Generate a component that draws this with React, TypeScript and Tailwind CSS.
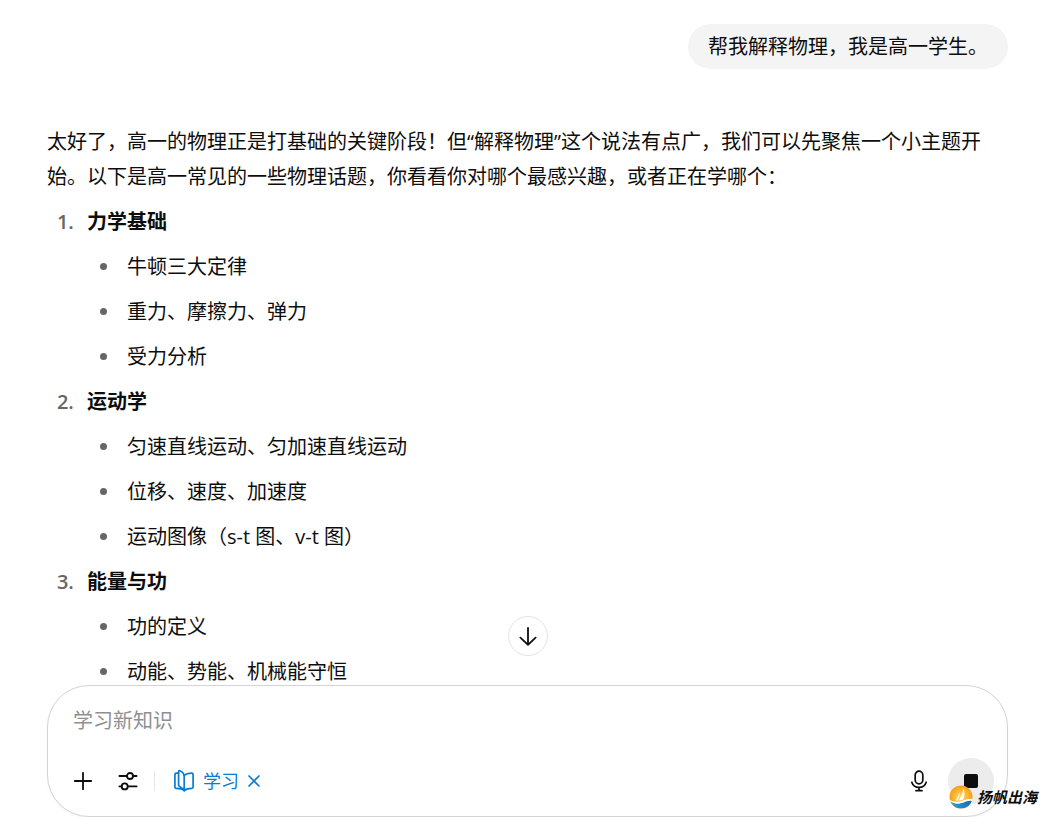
import { useState } from 'react'

const topics = [
  { title: '力学基础', items: ['牛顿三大定律', '重力、摩擦力、弹力', '受力分析'] },
  {
    title: '运动学',
    items: ['匀速直线运动、匀加速直线运动', '位移、速度、加速度', '运动图像（s-t 图、v-t 图）'],
  },
  { title: '能量与功', items: ['功的定义', '动能、势能、机械能守恒'] },
]

function PlusIcon() {
  return (
    <svg width="20" height="20" viewBox="0 0 20 20" fill="none" stroke="currentColor" strokeWidth="1.8" strokeLinecap="round">
      <path d="M10 1.8v16.4M1.8 10h16.4" />
    </svg>
  )
}

function SlidersIcon() {
  return (
    <svg width="20" height="20" viewBox="0 0 20 20" fill="none" stroke="currentColor" strokeWidth="1.8" strokeLinecap="round">
      <path d="M1.4 5h7.2M15.4 5h3.2M1.4 15.400h2.100M9.900 15.400h8.700" />
      <circle cx="12" cy="5" r="3" />
      <circle cx="6.700" cy="15.400" r="3" />
    </svg>
  )
}

function BookIcon() {
  return (
    <svg width="22" height="24" viewBox="0 0 22 24" fill="none" stroke="currentColor" strokeWidth="1.7" strokeLinecap="round" strokeLinejoin="round">
      <path d="M11.2 21.500c-1.800-1.600-4.600-2.200-8-2.200-.8 0-1.300-.5-1.300-1.300V5.500c0-.8.5-1.300 1.300-1.300h2.200" />
      <path d="M11.2 21.500c1.800-1.600 4.600-2.200 7.600-2.200.8 0 1.300-.5 1.300-1.300V5.500c0-.8-.5-1.300-1.300-1.300-3 0-5.800.6-7.600 2.300" />
      <path d="M11.2 21.500V7.500c0-2.300-1.500-4.500-4.200-5.700-.8-.3-1.400 0-1.400.9v13.400c0 .7.3 1.100.9 1.400 2 .9 3.600 2 4.700 4z" />
    </svg>
  )
}

function MicIcon() {
  return (
    <svg width="18" height="22" viewBox="0 0 18 22" fill="none" stroke="currentColor" strokeWidth="1.7" strokeLinecap="round">
      <rect x="5.2" y="1.2" width="7.6" height="12.6" rx="3.8" />
      <path d="M1.8 12.2c1 3.200 3.700 5.200 7.200 5.200s6.200-2 7.200-5.200M9 17.400v3.200M6 20.700h6" />
    </svg>
  )
}

function SailLogo() {
  return (
    <svg width="24" height="24" viewBox="0 0 24 24">
      <defs>
        <radialGradient id="sun" cx="0.5" cy="0.5" r="0.55">
          <stop offset="0" stopColor="#ffd75e" />
          <stop offset="1" stopColor="#f79a12" />
        </radialGradient>
        <linearGradient id="sea" x1="0" x2="1">
          <stop offset="0" stopColor="#2aa6e2" />
          <stop offset="1" stopColor="#1669b5" />
        </linearGradient>
      </defs>
      <circle cx="12" cy="12" r="11.5" fill="url(#sun)" />
      <path d="M1.500 16.500c3.500 2 7.500 2.300 11 1.200 3.700-1.200 6.200-2.900 10.400-2.200A11.500 11.500 0 0 1 1.500 16.500z" fill="url(#sea)" />
      <path d="M.8 14.800c3.600 2.100 7.500 2.600 11.200 1.500 4-1.200 7-3.100 11.400-2l-.4 1.600c-3.900-.8-6.800 1.100-10.500 2.200-4 1.200-7.800.7-11.200-1.800z" fill="#fff" />
      <path d="M14.600 3c1.300 4 1.100 8.400-.6 11.700l-4.600 1c2.800-3.700 4.500-7.700 5.200-12.700z" fill="#fff" />
      <path d="M10.400 7c.5 3 0 6-1.700 8.700l-2.900-.3c2.300-2.400 3.800-5.100 4.600-8.400z" fill="#fff3cf" />
    </svg>
  )
}

export default function App() {
  const [text, setText] = useState('')
  const [study, setStudy] = useState(true)

  return (
    <div className="relative flex h-screen flex-col bg-white pr-[45px] pl-[47px] font-['Open_Sans','Noto_Sans_CJK_SC',sans-serif] text-xl leading-[35px] text-[#0d0d0d]">
      <main className="min-h-0 flex-1 overflow-hidden pt-6" lang="zh-CN">
        <div className="flex justify-end">
          <div className="rounded-full bg-[#f4f4f4] px-5 py-[5px]">帮我解释物理，我是高一学生。</div>
        </div>

        <article className="pt-[55px]">
          <p>
            太好了，高一的物理正是打基础的关键阶段！但“解释物理”这个说法有点广，我们可以先聚焦一个小主题开始。以下是高一常见的一些物理话题，你看看你对哪个最感兴趣，或者正在学哪个：
          </p>
          <ol className="mt-[10px] list-decimal space-y-[10px] pl-8">
            {topics.map((t) => (
              <li key={t.title} className="pl-2 marker:font-semibold marker:text-[#666]">
                <strong className="font-bold">{t.title}</strong>
                <ul className="mt-[10px] list-disc space-y-[10px] pl-[34px]">
                  {t.items.map((item) => (
                    <li key={item} className="pl-[6px] marker:text-[#666]">
                      {item}
                    </li>
                  ))}
                </ul>
              </li>
            ))}
          </ol>
        </article>
      </main>

      <form
        className="relative shrink-0 rounded-[42px] border border-[#d4d4d4] bg-white px-[25px] pt-4 pb-3 shadow-xs"
        onSubmit={(e) => e.preventDefault()}
      >
        <button
          type="button"
          aria-label="滚动到底部"
          className="absolute bottom-full left-1/2 mb-[30px] flex size-10 -translate-x-1/2 items-center justify-center rounded-full border border-[#e3e3e3] bg-white"
        >
          <svg width="20" height="20" viewBox="0 0 20 20" fill="none" stroke="currentColor" strokeWidth="1.8" strokeLinecap="round" strokeLinejoin="round">
            <path d="M10 1.800v17M2.400 11.600l7.600 7.200 7.600-7.200" />
          </svg>
        </button>

        <input
          type="text"
          aria-label="学习新知识"
          placeholder="学习新知识"
          value={text}
          onChange={(e) => setText(e.target.value)}
          className="block h-9 w-full bg-transparent outline-none placeholder:text-[#8f8f8f]"
        />

        <div className="mt-5 flex h-[46px] items-center">
          <button type="button" aria-label="添加" className="flex size-5 items-center justify-center">
            <PlusIcon />
          </button>
          <button type="button" aria-label="工具" className="ml-[25px] flex size-5 items-center justify-center">
            <SlidersIcon />
          </button>
          <span className="ml-4 h-5 w-px bg-[#e5e5e5]" />
          {study && (
            <button
              type="button"
              onClick={() => setStudy(false)}
              className="ml-[18px] flex items-center text-lg text-[#0a7bd0]"
            >
              <BookIcon />
              <span className="ml-2">学习</span>
              <svg className="ml-2" width="14" height="14" viewBox="0 0 14 14" fill="none" stroke="currentColor" strokeWidth="1.7" strokeLinecap="round">
                <path d="M2 2l10 10M12 2L2 12" />
              </svg>
            </button>
          )}
          <button type="button" aria-label="语音输入" className="ml-auto">
            <MicIcon />
          </button>
          <button
            type="button"
            aria-label="停止"
            className="-mr-3 ml-5 flex size-[46px] items-center justify-center rounded-full bg-[#ececec]"
          >
            <span className="size-[14px] rounded-xs bg-[#0d0d0d]" />
          </button>
        </div>
      </form>

      <div className="absolute right-4 bottom-2 flex items-center gap-1 text-[15px] leading-6 font-bold italic">
        <SailLogo />
        <span>扬帆出海</span>
      </div>
    </div>
  )
}
